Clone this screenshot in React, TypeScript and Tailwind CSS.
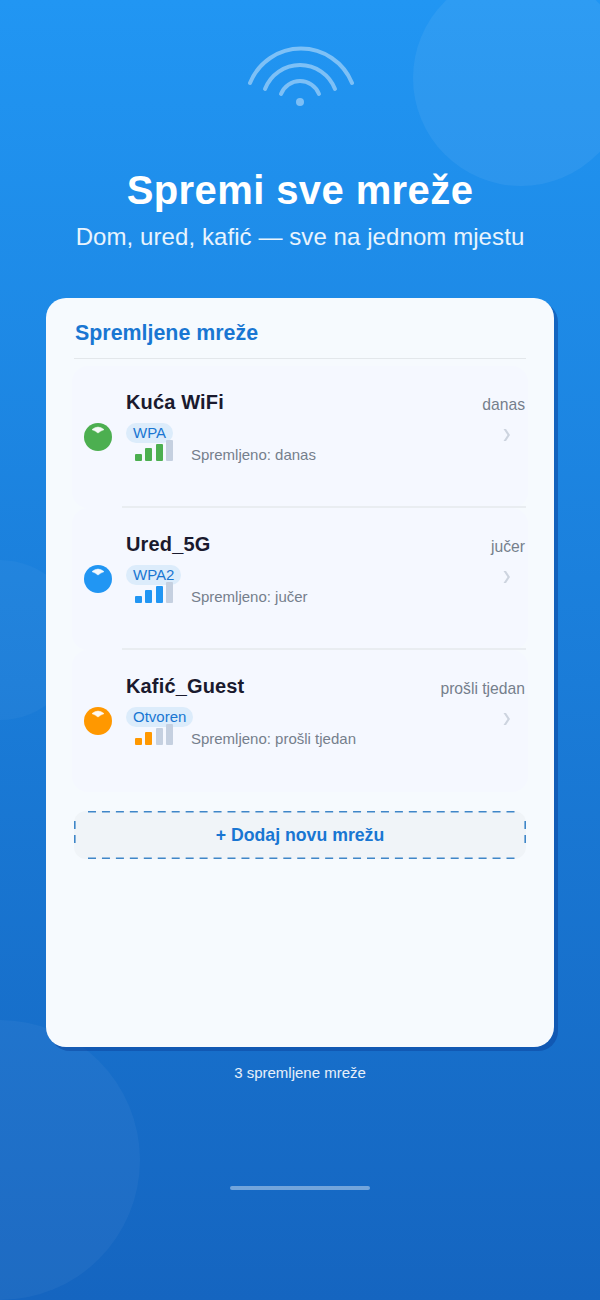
import React from "react";

const font = { fontFamily: '"Liberation Sans", Arial, sans-serif' };

function Dot({ color }: { color: string }) {
  return (
    <svg width="28" height="28" viewBox="0 0 28 28" className="shrink-0">
      <circle cx="14" cy="14" r="14" fill={color} />
      <path d="M8 6.6 Q14 1.6 20 6.6 Q16.5 7.8 14 10 Q11.5 7.8 8 6.6 Z" fill="#ffffff" opacity="0.95" strokeLinejoin="round" stroke="#ffffff" strokeWidth="0.6" />
    </svg>
  );
}

function Bars({ color, lit }: { color: string; lit: number }) {
  const hs = [7, 13, 17, 21];
  return (
    <div className="flex items-end gap-[3.3px] h-[21px]">
      {hs.map((h, i) => (
        <div
          key={i}
          className="w-[7px] rounded-[1px]"
          style={{ height: h, backgroundColor: i < lit ? color : "#c5d0e0" }}
        />
      ))}
    </div>
  );
}

function Row({
  name, sec, when, saved, color, lit, divider,
}: {
  name: string; sec: string; when: string; saved: string; color: string; lit: number; divider: boolean;
}) {
  return (
    <div className="relative h-[142px] -mx-[2px] pl-[12px] pr-[3px] rounded-[16px] bg-[#f5f8ff] flex items-center">
      <Dot color={color} />
      <div className="ml-[14px] flex-1 self-start pt-[25px]">
        <div className="text-[20px] leading-[23px] font-bold tracking-[0.15px] text-[#1a1a2e]">{name}</div>
        <div className="mt-[9px] flex">
          <span className="h-[20px] px-[7px] rounded-[10px] bg-[#dcecfb] text-[#1976d2] text-[15px] leading-[20px]">{sec}</span>
        </div>
        <div className="-mt-[3px] ml-[9px] flex items-end">
          <Bars color={color} lit={lit} />
          <span className="ml-[18px] text-[15px] leading-[16px] text-[#757f8c] -mb-[2px]">{saved}</span>
        </div>
      </div>
      <div className="self-start flex flex-col items-end pt-[30px]">
        <span className="text-[15.7px] leading-[17px] text-[#757f8c]">{when}</span>
        <svg width="7" height="12" viewBox="0 0 7 12" className="mt-[16px] mr-[15px]">
          <path d="M0.5 0 L3 0 L7 6 L3 12 L0.5 12 L4.5 6 Z" fill="#cdd4df" />
        </svg>
      </div>
      {divider && <div className="absolute left-[50px] right-[2px] bottom-0 h-[2px] bg-[#e9edf1]" />}
    </div>
  );
}

export default function App() {
  return (
    <div
      className="relative w-[600px] h-[1300px] overflow-hidden flex flex-col items-center bg-gradient-to-b from-[#2196f3] to-[#1565c0] text-white"
      style={font}
    >
      <div className="absolute w-[216px] h-[216px] rounded-full bg-white/[0.06] left-[413px] -top-[30px]" />
      <div className="absolute w-[160px] h-[160px] rounded-full bg-white/[0.03] -left-[80px] top-[560px]" />
      <div className="absolute w-[280px] h-[280px] rounded-full bg-white/[0.04] -left-[140px] top-[1020px]" />

      <svg width="120" height="80" viewBox="0 0 120 80" className="relative mt-[36px] shrink-0" fill="none">
        <g stroke="#ffffff" strokeOpacity="0.42" strokeWidth="4" strokeLinecap="round">
          <path d="M10 47 A55 55 0 0 1 112 47" />
          <path d="M25 53 A37.5 37.5 0 0 1 95 53" />
          <path d="M41 58 A20.4 20.4 0 0 1 79 58" />
        </g>
        <circle cx="60" cy="66" r="4" fill="#ffffff" fillOpacity="0.42" />
      </svg>

      <h1 className="relative mt-[51px] text-[40px] leading-[46px] font-bold tracking-[0.4px]">Spremi sve mreže</h1>
      <p className="relative mt-[10px] text-[24px] leading-[28px] tracking-[0.08px] text-white/90">Dom, ured, kafić — sve na jednom mjestu</p>

      <div className="relative mt-[47px] w-[508px] h-[749px] rounded-[20px] bg-[#f6fafe] px-[28px] pt-[22px] shadow-[4px_4px_0_rgba(13,71,161,0.55)] shrink-0">
        <div className="ml-[1px] text-[21.4px] leading-[26px] font-bold text-[#1976d2]">Spremljene mreže</div>
        <div className="mt-[12px] h-px bg-[#e3e7eb]" />
        <div className="mt-[7px]">
          <Row name="Kuća WiFi" sec="WPA" when="danas" saved="Spremljeno: danas" color="#4caf50" lit={3} divider />
          <Row name="Ured_5G" sec="WPA2" when="jučer" saved="Spremljeno: jučer" color="#2196f3" lit={3} divider />
          <Row name="Kafić_Guest" sec="Otvoren" when="prošli tjedan" saved="Spremljeno: prošli tjedan" color="#ff9800" lit={2} divider={false} />
        </div>
        <div className="relative mt-[19px] h-[48px] rounded-[12px] bg-[#f0f4f8] flex items-center justify-center text-[17.7px] font-bold text-[#1976d2]">
          + Dodaj novu mrežu
          <svg className="absolute left-0 top-0" width="452" height="48" viewBox="0 0 452 48" fill="none">
            <g stroke="#3f86c8" strokeWidth="1.6" strokeDasharray="8 5.95">
              <path d="M14 0.8 H441" />
              <path d="M14 47.2 H441" />
              <path d="M0.8 10 V32" />
              <path d="M451.2 10 V32" />
            </g>
          </svg>
        </div>
      </div>

      <div className="relative mt-[18px] text-[15px] leading-[16px] text-white/90">3 spremljene mreže</div>
      <div className="relative mt-[105px] w-[140px] h-[4px] rounded-full bg-white/40" />
    </div>
  );
}
